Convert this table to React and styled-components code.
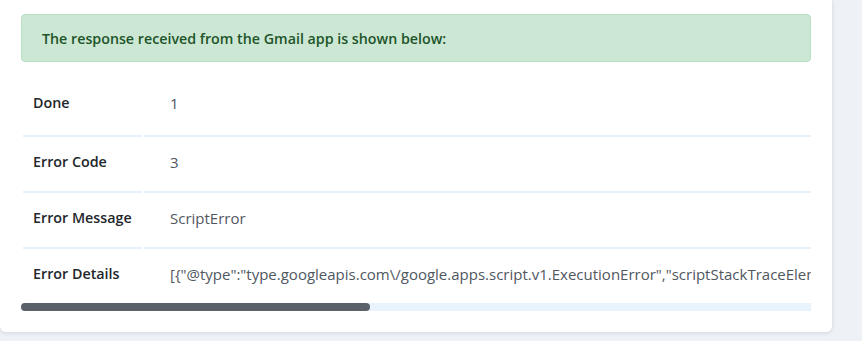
import React from "react";
import styled, { createGlobalStyle } from "styled-components";

const rows = [
	{ label: "Done", value: "1" },
	{ label: "Error Code", value: "3" },
	{ label: "Error Message", value: "ScriptError" },
	{
		label: "Error Details",
		value:
			'[{"@type":"type.googleapis.com\\/google.apps.script.v1.ExecutionError","scriptStackTraceElements":[{"function":"sendMail","lineNumber":14}],"errorMessage":"Exception: Service invoked too many times","errorType":"ScriptError"}]',
	},
];

function App() {
	return (
		<>
			<GlobalStyle />
			<Page>
				<Card>
					<Alert>The response received from the Gmail app is shown below:</Alert>
					<ScrollArea>
						<Clip>
							<Table>
								<colgroup>
									<LabelCol />
									<col />
								</colgroup>
								<tbody>
									{rows.map((row, i) => (
										<tr key={row.label}>
											<Label $first={i === 0}>{row.label}</Label>
											<Value $first={i === 0}>{row.value}</Value>
										</tr>
									))}
								</tbody>
							</Table>
						</Clip>
						<Track>
							<Thumb $size="44.2%" />
						</Track>
					</ScrollArea>
				</Card>
			</Page>
		</>
	);
}

const GlobalStyle = createGlobalStyle`
	body {
		margin: 0;
		background: #eef2f7;
		font-family: "Open Sans", "Lato", sans-serif;
	}
`;
const Page = styled.div`
	height: 341px;
	overflow: hidden;
`;
const Card = styled.div`
	width: 832px;
	box-sizing: border-box;
	background: #fff;
	border-radius: 0 0 6px 6px;
	box-shadow: 0 1px 4px rgba(30, 40, 60, 0.14);
	padding: 14px 21px 21px;
`;
const Alert = styled.div`
	height: 48px;
	box-sizing: border-box;
	display: flex;
	align-items: center;
	padding: 0 20px;
	background: #cce8d4;
	border: 1px solid #b8dfc3;
	border-radius: 4px;
	color: #1d5429;
	font-size: 14.25px;
	font-weight: 600;
`;
const ScrollArea = styled.div`
	margin-top: 14px;
`;
const Clip = styled.div`
	overflow: hidden;
`;
const Table = styled.table`
	table-layout: fixed;
	width: 1790px;
	border-collapse: separate;
	border-spacing: 2px 0;
	white-space: nowrap;
	font-size: 15px;
	line-height: 20px;
`;
const LabelCol = styled.col`
	width: 119px;
`;
const Cell = styled.td`
	padding: ${(p) => (p.$first ? "17px 0 22px" : "15px 0 19px")};
	border-top: ${(p) => (p.$first ? "none" : "2px solid #e7f1fb")};
	overflow: hidden;
`;
const Label = styled(Cell)`
	padding-left: 10px;
	color: #23272b;
	font-size: 14.3px;
	font-weight: 600;
`;
const Value = styled(Cell)`
	padding-left: 26px;
	padding-right: 20px;
	color: #50575f;
`;
const Track = styled.div`
	height: 8px;
	background: #e9f3fd;
`;
const Thumb = styled.div`
	width: ${(p) => p.$size};
	height: 100%;
	background: #5b6168;
	border-radius: 4px;
`;

export default App;
